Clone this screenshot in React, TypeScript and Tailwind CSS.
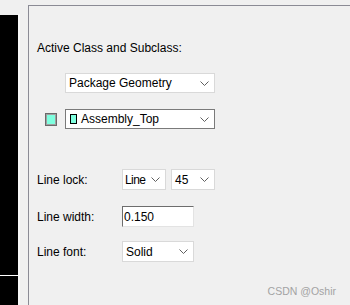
import React from "react";

function Chevron() {
  return (
    <svg width="9" height="5" viewBox="0 0 9 5" className="shrink-0">
      <path d="M0.5 0.5 L4.5 4.5 L8.5 0.5" fill="none" stroke="#5f5f5f" strokeWidth="1" />
    </svg>
  );
}

function Select({
  children,
  className,
}: {
  children: React.ReactNode;
  className: string;
}) {
  return (
    <div className={`flex items-center bg-white border ${className}`}>
      <div className="flex-1 flex items-center min-w-0 whitespace-nowrap">{children}</div>
      <div className="mr-[5px] flex items-center">
        <Chevron />
      </div>
    </div>
  );
}

export default function App() {
  return (
    <div className="relative w-[350px] h-[305px] bg-[#f0f0f0] flex overflow-hidden font-['Liberation_Sans',Arial,sans-serif] text-[12px] leading-[14px] text-black">
      {/* left dark panel */}
      <div className="w-[18px] flex flex-col pt-[15px]">
        <div className="flex-1 bg-black flex flex-col">
          <div className="flex-1" />
          <div className="h-px bg-white" />
          <div className="h-[29px]" />
        </div>
      </div>
      <div className="w-[2px] mt-[14px] bg-[#f8f8f8]" />
      <div className="w-[8px]" />

      {/* group box */}
      <div className="flex-1 mt-[5px] border-t border-l border-[#8b8b95] flex flex-col pl-[8px]">
        <div className="mt-[35px]">Active Class and Subclass:</div>

        <div className="mt-[18px] ml-[28px]">
          <Select className="w-[150px] h-[20px] border-[#d9d9d9]">
            <span className="pl-[3px]">Package Geometry</span>
          </Select>
        </div>

        <div className="mt-[16px] ml-[8px] flex items-center">
          <div className="w-[12px] h-[13px] border border-[#6a6a6a] bg-[#a0a0a0] p-px">
            <div className="w-full h-full bg-[#7fffdf]" />
          </div>
          <div className="ml-[8px]">
            <Select className="w-[150px] h-[20px] border-[#7a7a7a]">
              <span className="ml-[4px] w-[7px] h-[10px] border border-black bg-[#7fffdf] shrink-0" />
              <span className="ml-[4px]">Assembly_Top</span>
            </Select>
          </div>
        </div>

        <div className="mt-[40px] flex items-center">
          <div className="w-[85px]">Line lock:</div>
          <Select className="w-[44px] h-[21px] border-[#d9d9d9]">
            <span className="pl-[2px] tracking-[-0.6px]">Line</span>
          </Select>
          <div className="ml-[5px]">
            <Select className="w-[44px] h-[21px] border-[#d9d9d9]">
              <span className="pl-[3px]">45</span>
            </Select>
          </div>
        </div>

        <div className="mt-[16px] flex items-center">
          <div className="w-[85px]">Line width:</div>
          <div className="w-[72px] h-[21px] bg-white border border-t-[#6d6d6d] border-l-[#6d6d6d] border-b-[#e3e3e3] border-r-[#e3e3e3] flex items-center">
            <span className="pl-[1px]">0.150</span>
          </div>
        </div>

        <div className="mt-[14px] flex items-center">
          <div className="w-[85px]">Line font:</div>
          <Select className="w-[72px] h-[21px] border-[#d9d9d9]">
            <span className="pl-[3px]">Solid</span>
          </Select>
        </div>
      </div>

      <div className="absolute right-[14px] top-[285px] text-[10.5px] leading-[12px] text-[#a3a3a3]">
        CSDN @Oshir
      </div>
    </div>
  );
}
